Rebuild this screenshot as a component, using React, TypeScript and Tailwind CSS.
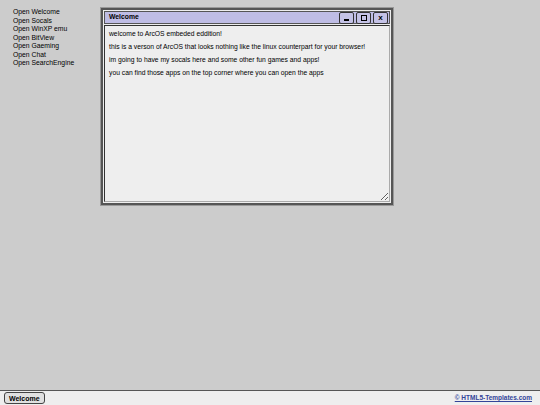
const MENU = [
  "Open Welcome",
  "Open Socals",
  "Open WinXP emu",
  "Open BitView",
  "Open Gaeming",
  "Open Chat",
  "Open SearchEngine",
];

const LINES = [
  "welcome to ArcOS embeded eddition!",
  "this is a verson of ArcOS that looks nothing like the linux counterpart for your browser!",
  "im going to have my socals here and some other fun games and apps!",
  "you can find those apps on the top corner where you can open the apps",
];

function TitleButton({ children }: { children: React.ReactNode }) {
  return (
    <button
      type="button"
      className="flex h-[12px] w-[15px] items-center justify-center rounded-[2px] border border-[#333] bg-[#c4c2e6] text-[8px] font-bold leading-none text-black"
    >
      {children}
    </button>
  );
}

export default function App() {
  return (
    <div
      className="flex h-[405px] w-[540px] flex-col bg-[#cccccc] text-black"
      style={{ fontFamily: '"Liberation Sans", Arial, sans-serif' }}
    >
      <div className="flex flex-1 items-start pl-[13px] pt-[8px]">
        <ul className="w-[88px] text-[6.8px] leading-[8.5px] text-black">
          {MENU.map((item) => (
            <li key={item} className="cursor-pointer">
              {item}
            </li>
          ))}
        </ul>

        <div className="flex h-[197px] w-[292px] flex-col border-2 border-[#555] bg-[#eeeeee] p-[1px] outline outline-1 outline-[#999]">
          <div className="flex h-[13px] items-center justify-between border border-[#555] bg-[#bfbde5] pl-[4px] pr-[1px]">
            <span className="text-[6.8px] font-bold">Welcome</span>
            <div className="flex gap-[2px]">
              <TitleButton>
                <span className="mt-[4px] block h-[2px] w-[5px] bg-black" />
              </TitleButton>
              <TitleButton>
                <span className="block h-[6px] w-[6px] border border-black" />
              </TitleButton>
              <TitleButton>x</TitleButton>
            </div>
          </div>
          <div className="mt-[1px] flex-1 resize overflow-auto border border-t-[#333] border-l-[#333] border-b-[#aaa] border-r-[#aaa] bg-[#eeeeee] px-[4px] pt-[1px] text-[6.75px] leading-[13px]">
            {LINES.map((line) => (
              <p key={line}>{line}</p>
            ))}
          </div>
        </div>
      </div>

      <div className="flex h-[15px] items-center justify-between border-t border-[#555] bg-[#eeeeee] pl-[4px] pr-[8px]">
        <button
          type="button"
          className="h-[12px] rounded-[3px] border border-[#444] bg-[#e0e0e0] px-[4px] text-[7px] font-bold leading-none"
        >
          Welcome
        </button>
        <a href="#" className="text-[6.5px] font-bold text-[#334499] underline">
          © HTML5-Templates.com
        </a>
      </div>
    </div>
  );
}
